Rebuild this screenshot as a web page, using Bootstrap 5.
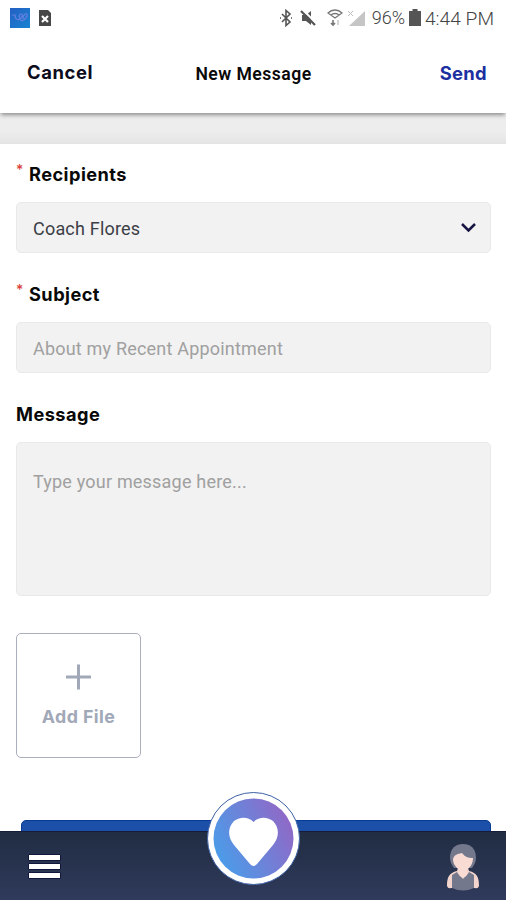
<!DOCTYPE html>
<html lang="en">
<head>
<meta charset="utf-8">
<meta name="viewport" content="width=device-width, initial-scale=1">
<title>New Message</title>
<link href="https://cdn.jsdelivr.net/npm/bootstrap@5.3.0/dist/css/bootstrap.min.css" rel="stylesheet">
<style>
body{font-family:Roboto,"Liberation Sans",sans-serif;color:#090909;background:#fff}
.screen{width:506px;height:900px}
.geo{font-family:Inter,"Open Sans",sans-serif;font-weight:700;letter-spacing:.45px}
.status{height:36px;padding:0 12px 0 10px;color:#666}
.status .pct{font-size:18px;line-height:24px;font-weight:300;color:#444}
.status .clock{font-size:19.2px;line-height:24px;font-weight:300;color:#444;padding-top:2px}
.topbar{height:77px;box-shadow:0 3px 4px -1px rgba(0,0,0,.4);z-index:1;padding:0 19px 5px 27px}
.topbar .btn{font-size:18.4px;line-height:24px;width:90px}
.topbar .cancel{letter-spacing:.6px;color:#0c0c1c}
.topbar .send{color:#1c2fa0;letter-spacing:.3px;padding-top:2px!important}
.topbar h1{font-size:17.6px;font-weight:600;line-height:24px;letter-spacing:.45px;padding-top:4px;margin-right:7px}
.band{height:31px;background:linear-gradient(#ececec,#ededed 60%,#e4e4e4)}
.form-area{padding:18px 15px 0 16px}
.form-area .form-label{font-size:18.2px;line-height:24px;margin:0 0 16px}
.req{color:#d9413b;font-size:14px;line-height:16px;width:13px;font-weight:500}
.field{background:#f2f2f2;border:1px solid #e9e9e9;border-radius:5px;height:51px;padding:1px 13px 0 16px;font-size:18px;letter-spacing:.2px;color:#3b4046}
.field::placeholder{color:#a0a0a0;opacity:1}
.field:focus{background:#f2f2f2}
.gap-b{margin-bottom:29px}
textarea.field{height:154px;padding:25px 16px;resize:none}
.add{width:125px;height:125px;margin-top:37px;border:1px solid #a9afbb;border-radius:5px;color:#a1a8b7;font-size:17.8px;letter-spacing:.4px;padding:3px 0 0}
.add svg{margin-bottom:14px}
.submit{height:60px;margin:62px 15px 0 21px;background:#1c4fa8;border:1px solid #073c94;border-radius:5px}
.dock{height:69px;background:linear-gradient(#202d42,#303a5c);border-top:1px solid #141c38;padding:2px 26px 0 28px}
.heart{left:206px;top:-41px;width:94px;height:94px}
</style>
</head>
<body>
<div class="screen position-relative overflow-hidden d-flex flex-column mx-auto">
  <div class="status d-flex align-items-center flex-shrink-0">
    <svg width="20" height="20" viewBox="0 0 20 20"><defs><linearGradient id="a" x1="0" y1="0" x2="1" y2="1"><stop stop-color="#2460c4"/><stop offset="1" stop-color="#1884d0"/></linearGradient></defs><path fill="url(#a)" d="M0 0h20v20H0z"/><path d="M2 7h3c0 5 4 6 6 3 2-2 2-4 0-4-3 0-2 6 1 7 3-1 6-5 5-7-3-1-4 3-4 5" fill="none" stroke="#657fe0" stroke-width="1.2"/></svg>
    <svg class="ms-2" width="15" height="18" viewBox="0 0 15 18"><path fill="#484848" d="M1 1h9l3 3v13H1z"/><path d="m4 7 6 6m0-6-6 6" stroke="#fff" stroke-width="2.200"/></svg>
    <div class="ms-auto d-flex align-items-center">
      <svg width="92" height="20" viewBox="0 0 92 20" fill="none" stroke="#555" stroke-width="1.600">
        <path d="m6 6 8 8-4 3.500v-15L14 6l-8 8M4 10h1m10 0h1"/>
        <path d="M26 7h4l5-4v14l-5-4h-4z" fill="#555" stroke="none"/><path d="m26 1 14 14" stroke="#fff" stroke-width="2"/><path d="m25 3 14 14" stroke-width="2.200"/>
        <path d="M52 5c4-4 10-4 14 0l-7 5zM55 7c2-2 6-2 8 0" stroke="#777" stroke-width="1.300"/><path d="M57 12v5m-2-2 2 2 2-2" stroke="#777"/><path d="M62 12v5" stroke="#ccc"/>
        <path d="M89 3v15H73z" fill="#c5c5c5" stroke="none"/><path d="m72 3 5 5m0-5-5 5" stroke="#bbb" stroke-width="1"/>
      </svg>
      <span class="pct ms-1">96%</span>
      <svg class="ms-1 me-1" width="12" height="18" viewBox="0 0 12 18"><path fill="#555" d="M3.500 0h5v2H12v15H0V2h3.500z"/></svg>
      <span class="clock">4:44 PM</span>
    </div>
  </div>
  <header class="topbar bg-white position-relative d-flex justify-content-between align-items-center flex-shrink-0">
    <button class="btn geo cancel p-0 border-0 text-start" type="button">Cancel</button>
    <h1 class="mb-0">New Message</h1>
    <button class="btn geo send p-0 border-0 text-end" type="button">Send</button>
  </header>
  <div class="band flex-shrink-0"></div>
  <form class="form-area">
    <label class="form-label geo d-flex" for="to"><span class="req">*</span>Recipients</label>
    <div id="to" class="field gap-b d-flex align-items-center justify-content-between">Coach Flores
      <svg width="17" height="12" viewBox="0 0 17 12"><path d="m2 2 6.500 6.500L15 2" fill="none" stroke="#171342" stroke-width="2.500"/></svg>
    </div>
    <label class="form-label geo d-flex" for="subject"><span class="req">*</span>Subject</label>
    <input id="subject" class="form-control field gap-b" placeholder="About my Recent Appointment">
    <label class="form-label geo d-flex" for="msg">Message</label>
    <textarea id="msg" class="form-control field" placeholder="Type your message here..."></textarea>
    <button type="button" class="btn add geo d-flex flex-column align-items-center justify-content-center">
      <svg width="26" height="26" viewBox="0 0 26 26"><path d="M12.500 .5v25M0 13h25" stroke="#a1a8b7" stroke-width="3"/></svg>
      <span>Add File</span>
    </button>
  </form>
  <div class="submit flex-shrink-0"></div>
  <nav class="dock position-absolute bottom-0 start-0 w-100 d-flex align-items-center justify-content-between">
    <svg width="34" height="28" viewBox="0 0 34 28"><path fill="#fff" stroke="#11163d" d="M.5 1.500h32v6H.5zm0 9h32v6H.5zm0 9h32v6H.5z"/></svg>
    <svg class="heart position-absolute" viewBox="0 0 94 94"><defs><linearGradient id="g" x1="0" y1=".75" x2="1" y2=".25"><stop offset=".05" stop-color="#4b9ce9"/><stop offset="1" stop-color="#9366c5"/></linearGradient></defs>
      <circle cx="47.500" cy="47.500" r="46" fill="#fff" stroke="#3c61a5"/><circle cx="47.500" cy="47.500" r="40" fill="url(#g)"/>
      <path fill="#fff" d="M47.500 31C42 25 33 26 28 30c-7 7-6 17 0 24l16 19q3.500 4 7 0l16-19c6-7 7-17 0-24-5-4-14-5-19.500 1z"/></svg>
    <svg width="34" height="50" viewBox="0 0 34 50"><path fill="#f4d5cd" d="M1 44c0-9 2-13 10-15l2-6h8l2 6c8 2 10 6 10 15q-1 3-4 2H5q-3 1-4-2z"/><path fill="#74788c" d="M6 46V33l5-3q6 11 12 0l5 3v13q-11 5-22 0z"/><path fill="#74788c" d="M4 16C4 6 10 2 17 2s13 4 13 14c0 4-2 7-4 10H8c-2-3-4-6-4-10z"/><path fill="#f8dcd4" d="M7 17c1-4 4-5 9-6 3 4 6 5 11 5 0 6-3 9-6 12v4l-4 5-4-5v-4c-3-3-6-6-6-11z"/></svg>
  </nav>
</div>
<script src="https://cdn.jsdelivr.net/npm/bootstrap@5.3.0/dist/js/bootstrap.bundle.min.js"></script>
</body>
</html>
